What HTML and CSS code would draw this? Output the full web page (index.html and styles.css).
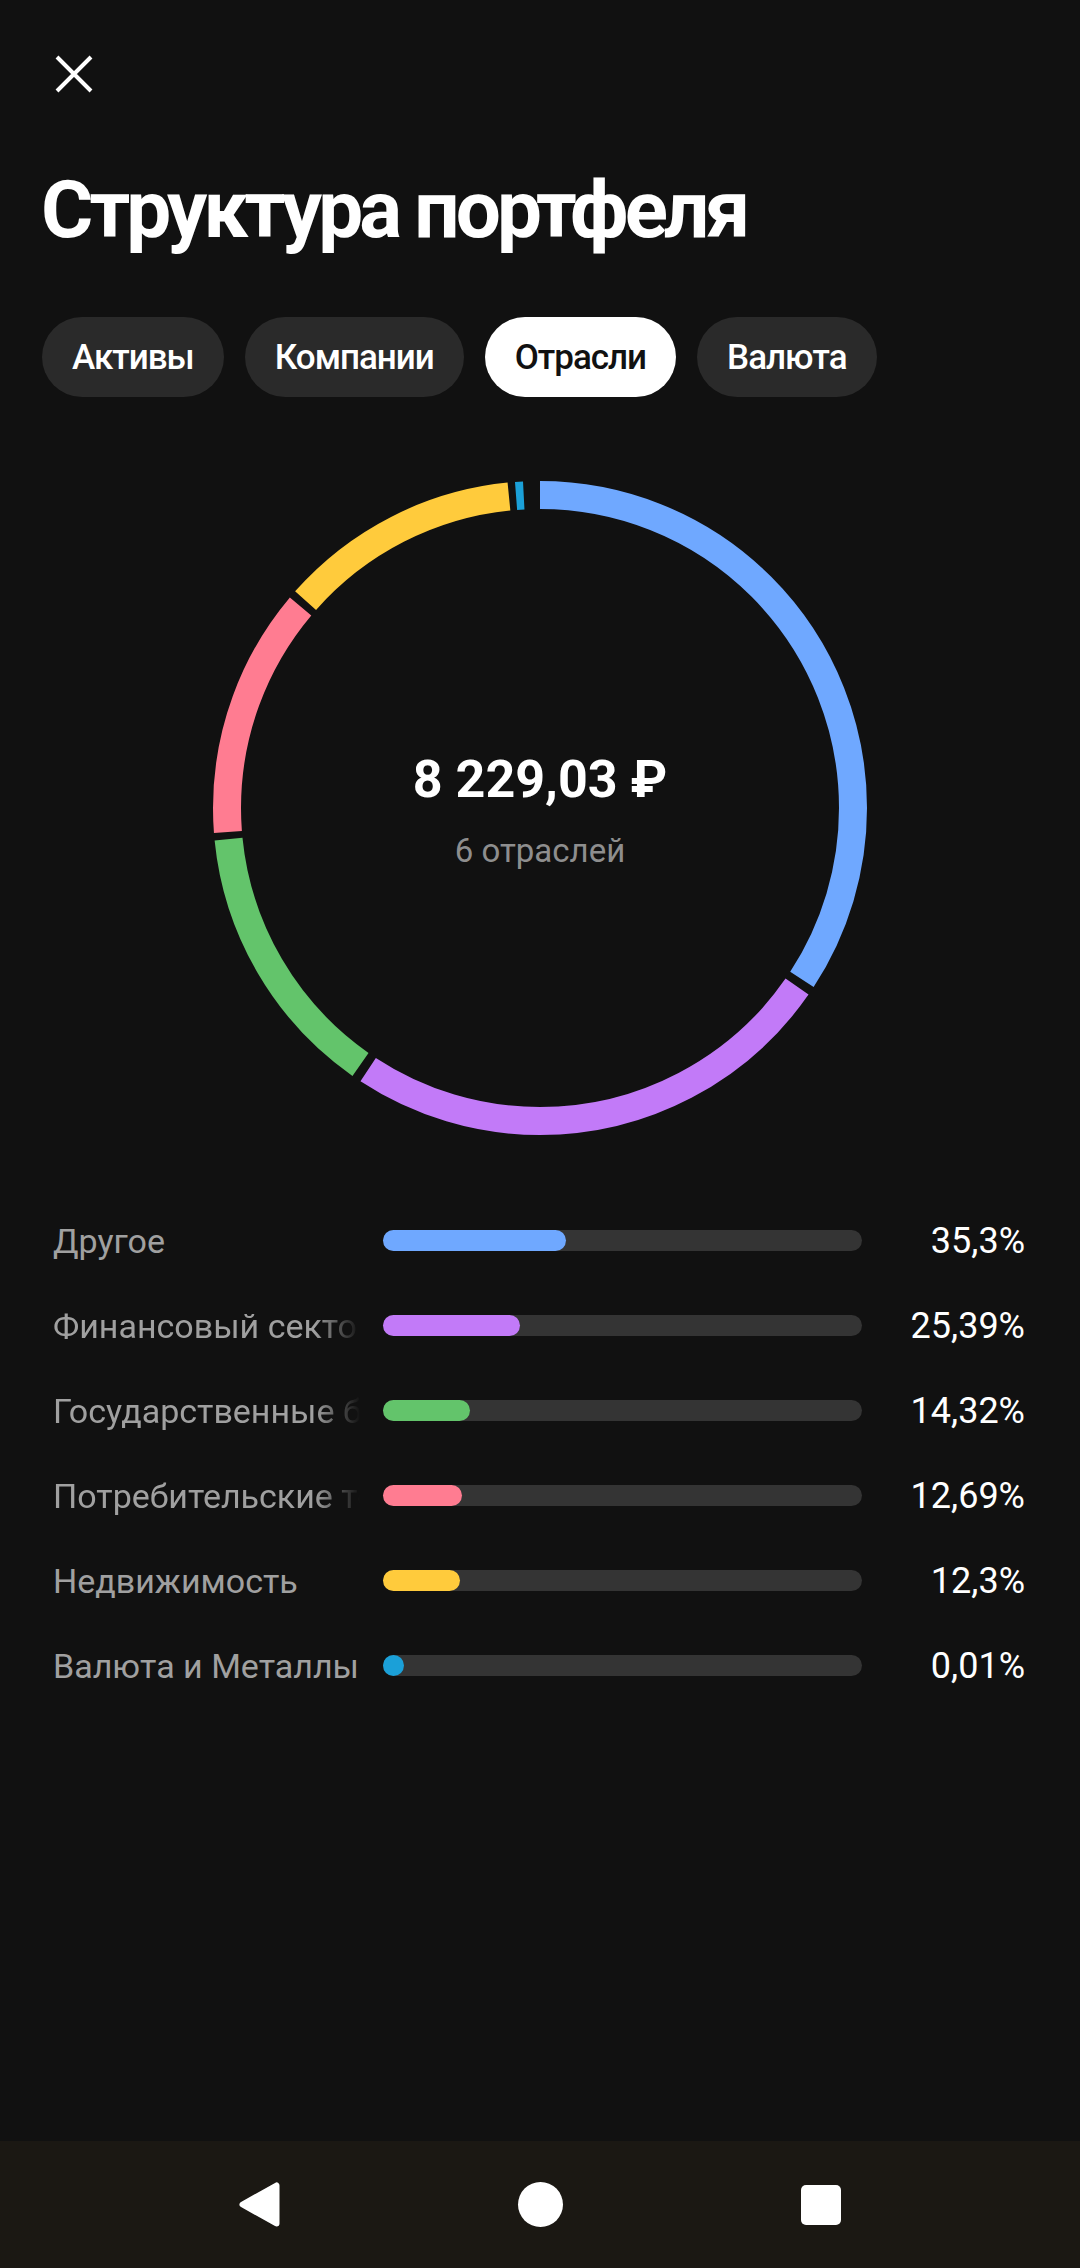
FILE: index.html
```html
<!DOCTYPE html>
<html>
<head>
    <title>Структура портфеля</title>
    <link rel="stylesheet" href="styles.css">
</head>
<body>
    <div class="screen">
        <div class="top-bar">
            <button class="close" aria-label="Закрыть">
                <svg width="38" height="38" viewBox="0 0 38 38">
                    <path d="M2 2 L36 36 M36 2 L2 36" stroke="#fff" stroke-width="4" fill="none"/>
                </svg>
            </button>
        </div>

        <h1 class="title">Структура портфеля</h1>

        <div class="tabs">
            <span class="tab">Активы</span>
            <span class="tab">Компании</span>
            <span class="tab tab-active">Отрасли</span>
            <span class="tab">Валюта</span>
        </div>

        <!-- donut: pathLength=360 so dash values are degrees -->
        <div class="chart">
            <svg class="donut" width="660" height="660" viewBox="0 0 660 660">
                <g transform="rotate(-90 330 330)" fill="none" stroke-width="28">
                    <circle cx="330" cy="330" r="313" pathLength="360" stroke="#6fa8ff" stroke-dasharray="123.2 360" stroke-dashoffset="0"/>
                    <circle cx="330" cy="330" r="313" pathLength="360" stroke="#c27af8" stroke-dasharray="88.5 360" stroke-dashoffset="-124.8"/>
                    <circle cx="330" cy="330" r="313" pathLength="360" stroke="#63c46b" stroke-dasharray="49.3 360" stroke-dashoffset="-215"/>
                    <circle cx="330" cy="330" r="313" pathLength="360" stroke="#ff7c91" stroke-dasharray="44.5 360" stroke-dashoffset="-265.6"/>
                    <circle cx="330" cy="330" r="313" pathLength="360" stroke="#ffcb3c" stroke-dasharray="42.8 360" stroke-dashoffset="-311.5"/>
                    <circle cx="330" cy="330" r="313" pathLength="360" stroke="#1ba0d8" stroke-dasharray="1.4 360" stroke-dashoffset="-355.6"/>
                </g>
            </svg>
            <div class="chart-center">
                <div class="total">8 229,03 ₽</div>
                <div class="count">6 отраслей</div>
            </div>
        </div>

        <ul class="sectors">
            <li class="sector">
                <span class="sector-name">Другое</span>
                <span class="track"><span class="fill fill-blue" style="width: 183px"></span></span>
                <span class="share">35,3%</span>
            </li>
            <li class="sector">
                <span class="sector-name cut">Финансовый сектор</span>
                <span class="track"><span class="fill fill-purple" style="width: 137px"></span></span>
                <span class="share">25,39%</span>
            </li>
            <li class="sector">
                <span class="sector-name cut">Государственные бумаги</span>
                <span class="track"><span class="fill fill-green" style="width: 87px"></span></span>
                <span class="share">14,32%</span>
            </li>
            <li class="sector">
                <span class="sector-name cut">Потребительские товары</span>
                <span class="track"><span class="fill fill-pink" style="width: 79px"></span></span>
                <span class="share">12,69%</span>
            </li>
            <li class="sector">
                <span class="sector-name">Недвижимость</span>
                <span class="track"><span class="fill fill-yellow" style="width: 77px"></span></span>
                <span class="share">12,3%</span>
            </li>
            <li class="sector">
                <span class="sector-name">Валюта и Металлы</span>
                <span class="track"><span class="fill fill-cyan" style="width: 21px"></span></span>
                <span class="share">0,01%</span>
            </li>
        </ul>
    </div>

    <div class="nav-bar">
        <svg width="41" height="45" viewBox="0 0 41 45">
            <polygon points="3.5,22.5 37.5,3.5 37.5,41.5" fill="#fff" stroke="#fff" stroke-width="6" stroke-linejoin="round"/>
        </svg>
        <span class="nav-home"></span>
        <span class="nav-recent"></span>
    </div>
</body>
</html>
```

FILE: styles.css
```css
/* page */
body {
    margin: 0;
    min-height: 2268px;
    display: flex;
    flex-direction: column;
    background-color: #111111;
    color: #fff;
    font-family: Roboto, "Noto Sans", sans-serif;
}

.screen {
    flex: 1;
}

/* header */
.top-bar {
    padding: 55px 0 0 55px;
}

.close {
    display: block;
    padding: 0;
    border: none;
    background: none;
    cursor: pointer;
}

.close svg {
    display: block;
}

.title {
    margin: 66px 0 0 41px;
    font-size: 80px;
    line-height: 102px;
    font-weight: 700;
    letter-spacing: -3.9px;
}

/* tabs */
.tabs {
    display: flex;
    gap: 21px;
    margin: 56px 0 0 42px;
}

.tab {
    height: 80px;
    padding: 0 30px;
    display: flex;
    align-items: center;
    border-radius: 40px;
    background-color: #2a2a2a;
    font-size: 35px;
    font-weight: 500;
    letter-spacing: -1px;
}

.tab-active {
    background-color: #fff;
    color: #111;
}

/* donut */
.chart {
    display: grid;
    justify-content: center;
    align-items: center;
    margin-top: 81px;
}

.donut,
.chart-center {
    grid-area: 1 / 1;
}

.donut {
    display: block;
}

.chart-center {
    padding-top: 4px;
    text-align: center;
}

.total {
    font-size: 52px;
    line-height: 60px;
    font-weight: 700;
}

.count {
    margin-top: 21px;
    font-size: 33px;
    line-height: 40px;
    color: #8e8e8e;
}

/* sector list */
.sectors {
    list-style: none;
    margin: 60px 0 0;
    padding: 0 55px 0 53px;
}

.sector {
    height: 85px;
    display: grid;
    grid-template-columns: 307px 479px 1fr;
    column-gap: 23px;
    align-items: center;
}

.sector-name {
    overflow: hidden;
    white-space: nowrap;
    font-size: 34px;
    color: #a0a0a0;
}

.sector-name.cut {
    -webkit-mask-image: linear-gradient(to right, #000 calc(100% - 45px), transparent);
    mask-image: linear-gradient(to right, #000 calc(100% - 45px), transparent);
}

.track {
    height: 21px;
    border-radius: 11px;
    background-color: #343434;
}

.fill {
    display: block;
    height: 100%;
    border-radius: 11px;
}

.fill-blue { background-color: #6fa8ff; }
.fill-purple { background-color: #c27af8; }
.fill-green { background-color: #63c46b; }
.fill-pink { background-color: #ff7c91; }
.fill-yellow { background-color: #ffcb3c; }
.fill-cyan { background-color: #1ba0d8; }

.share {
    justify-self: end;
    font-size: 36px;
}

/* android nav */
.nav-bar {
    height: 127px;
    display: flex;
    justify-content: center;
    align-items: center;
    gap: 238px;
    background-color: #1b1813;
}

.nav-bar svg {
    display: block;
}

.nav-home {
    width: 45px;
    height: 45px;
    border-radius: 50%;
    background-color: #fff;
}

.nav-recent {
    width: 40px;
    height: 40px;
    border-radius: 5px;
    background-color: #fff;
}
```
